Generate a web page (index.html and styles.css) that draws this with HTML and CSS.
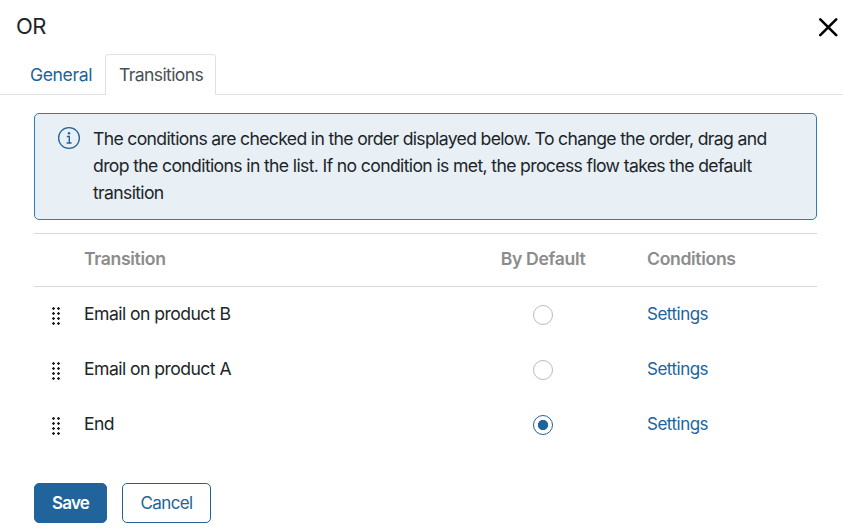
FILE: index.html
```html
<!DOCTYPE html>
<html lang="en">
<head>
<meta charset="utf-8">
<title>OR</title>
<link rel="stylesheet" href="styles.css">
</head>
<body>
<header class="header"><h1 class="title">OR</h1>
<button class="close" aria-label="Close"><svg width="20" height="20" viewBox="0 0 20 20"><path d="M2.3 2.3L18.2 18.2M18.2 2.3L2.3 18.2" fill="none" stroke="#000" stroke-width="2.6" stroke-linecap="round"/></svg></button></header>
<nav class="tabs"><a class="tab">General</a><a class="tab active">Transitions</a></nav>
<main class="content">
<section class="notice">
<svg class="info" width="24" height="24" viewBox="0 0 24 24"><circle cx="12" cy="12" r="10.4" fill="none" stroke="#20649b" stroke-width="1.3"/><circle cx="12" cy="7.2" r="1.2" fill="#20649b"/><path d="M9.8 10.5H12.3V17M9.6 17H14.6" fill="none" stroke="#20649b" stroke-width="1.4"/></svg>
<p>The conditions are checked in the order displayed below. To change the order, drag and<br><span class="line2">drop the conditions in the list. If no condition is met, the process flow takes the default</span><br>transition</p>
</section>
<div class="table">
<div class="row head"><span></span><span>Transition</span><span class="center">By Default</span><span class="last">Conditions</span></div>
<div class="row"><i class="grip"></i><span class="name">Email on product B</span><span class="radio"></span><a class="last">Settings</a></div>
<div class="row"><i class="grip"></i><span class="name">Email on product A</span><span class="radio"></span><a class="last">Settings</a></div>
<div class="row"><i class="grip"></i><span class="name">End</span><span class="radio checked"></span><a class="last">Settings</a></div>
</div>
<footer class="actions"><button class="btn primary">Save</button><button class="btn">Cancel</button></footer>
</main>
</body>
</html>
```
FILE: styles.css
```css
* { box-sizing: border-box; }
body { margin: 0; height: 530px; overflow: hidden; background: #fff; color: #212529; font: 17.6px/27px Inter, sans-serif; letter-spacing: -0.57px; }
.header { display: flex; justify-content: space-between; align-items: center; height: 54px; padding: 0 5px 0 16px; }
.title { margin: -2px 0 0; font-size: 22px; font-weight: 400; letter-spacing: -0.5px; }
.close { display: flex; padding: 0; border: 0; background: none; }
.tabs { display: flex; height: 41px; padding-left: 16px; border-bottom: 1px solid #dee2e6; }
.tab { width: 89px; height: 41px; padding: 7px 0 0 14px; color: #20649b; letter-spacing: -0.4px; }
.active { width: 111px; padding: 6px 0 0 13px; border: 1px solid #dee2e6; border-bottom: 0; border-radius: 4px 4px 0 0; background: #fff; color: #495057; letter-spacing: -0.62px; }
.content { padding: 18px 26px 0 34px; }
.notice { display: flex; height: 107px; padding: 12px 22px; gap: 12px; border: 1px solid #2f7db8; border-radius: 5px; background: #e8eff5; }
.notice p { margin: -1px 0 0; white-space: nowrap; letter-spacing: -0.66px; }
.line2 { letter-spacing: -0.635px; }
.info { flex: none; }
.table { margin-top: 13px; }
.row { display: grid; grid-template-columns: 50px 383px 152px 1fr; align-items: center; height: 55px; }
.head { height: 54px; padding-bottom: 3px; border-top: 1px solid #d9d9d9; border-bottom: 1px solid #d9d9d9; color: #8c8c8c; font-weight: 600; letter-spacing: -0.33px; }
.center { text-align: center; }
.name { margin-top: -2px; letter-spacing: -0.55px; }
.last { padding-left: 28px; }
.row a { margin-top: -1px; color: #20649b; font-size: 17px; letter-spacing: -0.5px; }
.grip { width: 9px; height: 18px; margin: 2px 0 0 18px; background: radial-gradient(circle at 1.5px 1.5px, #222 1.1px, transparent 1.5px) 0 0 / 5px 5px; }
.radio { justify-self: center; width: 20px; height: 20px; border: 1px solid #bbb; border-radius: 50%; }
.checked { border-color: #20649b; background: radial-gradient(circle, #20649b 4.8px, #fff 5.4px); }
.actions { display: flex; gap: 15px; margin-top: 31px; }
.btn { width: 89px; height: 40px; padding: 0; border: 1px solid #20649b; border-radius: 5px; background: #fff; color: #20649b; font: inherit; font-size: 17px; letter-spacing: -0.6px; }
.primary { width: 73px; background: #20649b; color: #fff; font-weight: 600; letter-spacing: -0.8px; }
```
